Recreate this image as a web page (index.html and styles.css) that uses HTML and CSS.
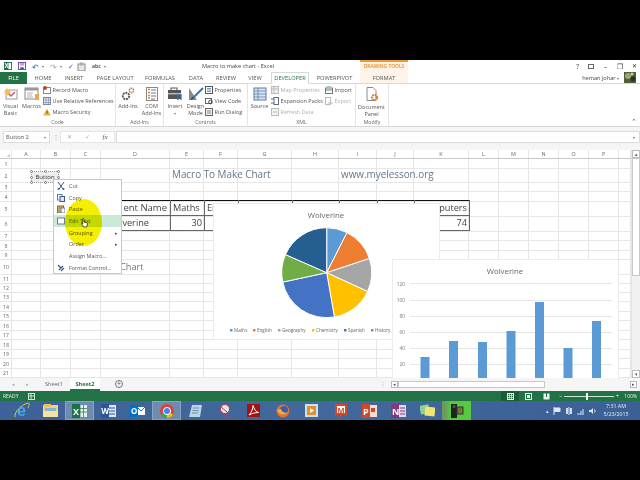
FILE: index.html
```html
<!DOCTYPE html>
<html lang="en">
<head>
<meta charset="utf-8">
<title>Macro to make chart - Excel</title>
<link rel="stylesheet" href="styles.css">
</head>
<body>
<div class="screen">
  <header class="titlebar">
    <div class="qat">
      <svg width="8" height="8" viewBox="0 0 9 9"><rect width="9" height="9" fill="#1e7145"/><rect x="5" y="1" width="3" height="7" fill="#fff"/><text x="0.5" y="7" class="svgb" fill="#fff" font-size="7">X</text></svg>
      <svg class="q-save" width="8" height="8" viewBox="0 0 9 9"><rect x=".5" y=".5" width="8" height="8" fill="none" stroke="#6a3d9a"/><rect x="2" y="1" width="5" height="3" fill="#b9a2d6"/><rect x="2.500" y="6" width="4" height="2.500" fill="#6a3d9a"/></svg>
      <span class="qu">↶</span><span class="qa">▾</span>
      <span class="qr">↷</span><span class="qa">▾</span>
      <span class="qs">✓</span>
      <svg width="9" height="9" viewBox="0 0 9 9"><rect x="1" y="2" width="7" height="7" fill="#e8e8e8" stroke="#8a8a8a"/><rect x="3" y="0.5" width="3" height="3" fill="#aaa"/></svg>
      <span class="qabc">abc</span><span class="qa">▾</span>
    </div>
    <div class="doctitle">Macro to make chart - Excel</div>
    <div class="drawtools">DRAWING TOOLS</div>
    <div class="winbtns"><span>?</span><span class="winbox"></span><span>–</span><span>❐</span><span class="winx">✕</span></div>
  </header>

  <nav class="tabs">
    <span class="tab file">FILE</span>
    <span class="tab t-home">HOME</span>
    <span class="tab t-ins">INSERT</span>
    <span class="tab t-page">PAGE LAYOUT</span>
    <span class="tab t-form">FORMULAS</span>
    <span class="tab t-data">DATA</span>
    <span class="tab t-rev">REVIEW</span>
    <span class="tab t-view">VIEW</span>
    <span class="tab dev">DEVELOPER</span>
    <span class="tab t-pp">POWERPIVOT</span>
    <span class="tab format">FORMAT</span>
    <span class="user">heman johar <i class="qa">▾</i></span>
    <svg class="avatar" width="12" height="11" viewBox="0 0 12 11"><rect width="12" height="11" fill="#4f5f38"/><circle cx="4" cy="4" r="3" fill="#9aa878"/><circle cx="9" cy="7" r="2.500" fill="#2b3320"/><circle cx="8" cy="2" r="1.500" fill="#c8cfa8"/></svg>
  </nav>

  <section class="ribbon">
    <div class="group g-code">
      <div class="gbody">
        <div class="big b-vb">
          <svg width="16" height="14" viewBox="0 0 16 14"><rect x="3" y="3" width="11" height="9" fill="#fff" stroke="#9c9c9c"/><path d="M1 5 L4 1 L8 5 L5 9 Z" fill="#f3c15b"/><path d="M6 7 l2 2 l4 -4" fill="none" stroke="#d04a7b" stroke-width="1.400"/></svg>
          <span>Visual<br>Basic</span>
        </div>
        <div class="big b-mac">
          <svg width="16" height="14" viewBox="0 0 16 14"><rect x="1" y="1" width="13" height="11" fill="#fff" stroke="#8a8a8a"/><rect x="1" y="1" width="13" height="2.500" fill="#9a9a9a"/><path d="M3 6h6M3 8h5M3 10h6" stroke="#b5b5b5"/><path d="M11 7h4v6h-4z" fill="#f0a94a"/></svg>
          <span>Macros</span>
        </div>
        <div class="smalls s-code">
          <div class="small"><svg width="8" height="8" viewBox="0 0 8 8"><rect x=".5" y="1.500" width="7" height="6" fill="#fff" stroke="#888"/><circle cx="2" cy="2" r="2" fill="#c8402f"/></svg>Record Macro</div>
          <div class="small"><svg width="8" height="8" viewBox="0 0 8 8"><rect x=".5" y=".5" width="7" height="7" fill="#dfe6f2" stroke="#7a8aa5"/><path d="M0 3h8M0 5.500h8M3 0v8M5.500 0v8" stroke="#7a8aa5" stroke-width=".6"/></svg>Use Relative References</div>
          <div class="small"><svg width="8" height="8" viewBox="0 0 8 8"><path d="M4 .5 L7.800 7.500 H.2 Z" fill="#e8b23c"/><rect x="3.600" y="3" width=".9" height="2.400" fill="#5a4210"/></svg>Macro Security</div>
        </div>
      </div>
      <div class="glabel">Code</div>
    </div>

    <div class="group g-add">
      <div class="gbody">
        <div class="big b-add">
          <svg width="16" height="14" viewBox="0 0 16 14"><circle cx="6" cy="9" r="3.200" fill="none" stroke="#5c5c5c" stroke-width="2" stroke-dasharray="2 .8"/><circle cx="11.500" cy="3.500" r="2.200" fill="none" stroke="#c9863a" stroke-width="1.600" stroke-dasharray="1.500 .6"/></svg>
          <span>Add-Ins</span>
        </div>
        <div class="big b-com">
          <svg width="16" height="14" viewBox="0 0 16 14"><rect x="2.500" y=".5" width="11" height="13" fill="#fff" stroke="#8a8a8a"/><path d="M7 3h5M7 6h5M7 9h5M7 12h4" stroke="#777"/><path d="M4 2.500h2M4 5.500h2M4 8.500h2M4 11h2" stroke="#d9842b" stroke-width="1.300"/></svg>
          <span>COM<br>Add-Ins</span>
        </div>
      </div>
      <div class="glabel">Add-Ins</div>
    </div>

    <div class="group g-ctl">
      <div class="gbody">
        <div class="big b-ins">
          <svg width="16" height="14" viewBox="0 0 16 14"><rect x="1" y="3" width="13" height="9" fill="#555"/><rect x="4" y="1" width="6" height="2.500" fill="none" stroke="#555"/><rect x="1" y="6" width="13" height="1.400" fill="#bbb"/><path d="M11 7v6M14 7v6" stroke="#2e75b6" stroke-width="1.300"/></svg>
          <span>Insert<br><i class="qa">▾</i></span>
        </div>
        <div class="big b-des">
          <svg width="16" height="14" viewBox="0 0 16 14"><path d="M1 13 V1 L9 13 Z" fill="#8a8a8a"/><path d="M4 12 L15 1" stroke="#2e75b6" stroke-width="2"/><path d="M3 13 L5 10" stroke="#333"/></svg>
          <span>Design<br>Mode</span>
        </div>
        <div class="smalls s-ctl">
          <div class="small"><svg width="8" height="8" viewBox="0 0 8 8"><rect x=".5" y=".5" width="7" height="7" fill="#fff" stroke="#555"/><path d="M2 2.500h4M2 4h4M2 5.500h4" stroke="#2e75b6" stroke-width=".7"/></svg>Properties</div>
          <div class="small"><svg width="8" height="8" viewBox="0 0 8 8"><rect x=".5" y="1.500" width="6" height="5" fill="#fff" stroke="#666"/><circle cx="5.500" cy="5" r="1.800" fill="none" stroke="#444"/></svg>View Code</div>
          <div class="small"><svg width="8" height="8" viewBox="0 0 8 8"><rect x=".5" y=".5" width="7" height="7" fill="#eee" stroke="#666"/><rect x="2" y="2" width="4" height="4" fill="#bbb"/></svg>Run Dialog</div>
        </div>
      </div>
      <div class="glabel">Controls</div>
    </div>

    <div class="group g-xml">
      <div class="gbody">
        <div class="big b-src">
          <svg width="16" height="14" viewBox="0 0 16 14"><rect x="2" y="1" width="12" height="12" fill="#dbe6f3" stroke="#5b7fa8"/><path d="M2 4h12M2 7h12M2 10h12M6 1v12" stroke="#5b7fa8" stroke-width=".8"/></svg>
          <span>Source</span>
        </div>
        <div class="smalls s-xml1">
          <div class="small off"><svg width="8" height="8" viewBox="0 0 8 8"><rect x=".5" y=".5" width="7" height="7" fill="#eee" stroke="#bbb"/><path d="M0 3h8M3 0v8" stroke="#bbb"/></svg>Map Properties</div>
          <div class="small"><svg width="8" height="8" viewBox="0 0 8 8"><rect x="3" y=".5" width="4.500" height="7" fill="#fff" stroke="#667"/><path d="M0 2h3M0 6h3" stroke="#2e75b6" stroke-width="1.200"/></svg>Expansion Packs</div>
          <div class="small off"><svg width="8" height="8" viewBox="0 0 8 8"><rect x=".5" y=".5" width="7" height="7" fill="#f2f2f2" stroke="#bbb"/><path d="M2 4h4" stroke="#bbb"/></svg>Refresh Data</div>
        </div>
        <div class="smalls s-xml2">
          <div class="small"><svg width="8" height="8" viewBox="0 0 8 8"><rect x=".5" y="2" width="7" height="5.500" fill="#fff" stroke="#777"/><path d="M2 0h4M1 4h6" stroke="#4c8a5a"/></svg>Import</div>
          <div class="small off"><svg width="8" height="8" viewBox="0 0 8 8"><rect x=".5" y=".5" width="5" height="7" fill="#fff" stroke="#bbb"/><path d="M3 6h5" stroke="#bbb"/></svg>Export</div>
        </div>
      </div>
      <div class="glabel">XML</div>
    </div>

    <div class="group g-mod">
      <div class="gbody">
        <div class="big b-doc">
          <svg width="16" height="15" viewBox="0 0 16 15"><path d="M3 .5h6l3 3v10H3z" fill="#fff" stroke="#8a8a8a"/><circle cx="10.500" cy="10.500" r="2.600" fill="none" stroke="#e07b24" stroke-width="2" stroke-dasharray="1.700 .7"/></svg>
          <span>Document<br>Panel</span>
        </div>
      </div>
      <div class="glabel">Modify</div>
    </div>
    <span class="collapse">⌃</span>
  </section>

  <section class="fbar">
    <div class="namebox"><span>Button 2</span><i class="qa">▾</i></div>
    <span class="fdots">⋮</span>
    <div class="fbtns"><span>✕</span><span>✓</span><span class="fx">fx</span></div>
    <div class="finput"><i class="qa">▾</i></div>
  </section>

  <section class="sheet">
    <div class="grid">
      <div class="cols">
        <div class="col corner"></div>
        <div class="col">A</div><div class="col">B</div><div class="col">C</div><div class="col">D</div>
        <div class="col">E</div><div class="col">F</div><div class="col">G</div><div class="col">H</div>
        <div class="col">I</div><div class="col">J</div><div class="col">K</div><div class="col">L</div>
        <div class="col">M</div><div class="col">N</div><div class="col">O</div><div class="col">P</div>
        <div class="col"></div>
      </div>
      <div class="rows">
        <div class="row"><span>1</span></div><div class="row"><span>2</span></div><div class="row"><span>3</span></div>
        <div class="row"><span>4</span></div><div class="row"><span>5</span></div><div class="row"><span>6</span></div>
        <div class="row"><span>7</span></div><div class="row"><span>8</span></div><div class="row"><span>9</span></div>
        <div class="row"><span>10</span></div><div class="row"><span>11</span></div><div class="row"><span>12</span></div>
        <div class="row"><span>13</span></div><div class="row"><span>14</span></div><div class="row"><span>15</span></div>
        <div class="row"><span>16</span></div><div class="row"><span>17</span></div><div class="row"><span>18</span></div>
        <div class="row"><span>19</span></div><div class="row"><span>20</span></div><div class="row"><span>21</span></div>
      </div>

      <div class="bigtext t-title">Macro To Make Chart</div>
      <div class="bigtext t-url">www.myelesson.org</div>
      <div class="bigtext t-chart">Chart</div>

      <table class="data">
        <colgroup><col class="w69"><col class="w34"><col class="w34"><col class="w54"><col class="w47"><col class="w38"><col class="w37"><col class="w55"></colgroup>
        <tr><th class="right name">ent Name</th><th>Maths</th><th>English</th><th></th><th></th><th></th><th></th><th class="right">puters</th></tr>
        <tr><td class="right name2">verine</td><td class="right">30</td><td></td><td></td><td></td><td></td><td></td><td class="right">74</td></tr>
      </table>

      <div class="chart pie">
        <svg width="225" height="135" viewBox="214 204 225 135">
          <text x="326" y="218" class="ctitle" text-anchor="middle">Wolverine</text>
          <g transform="translate(326.700 272.700)" stroke="#fff" stroke-width="1">
            <path d="M0 0V-45A45 45 0 0 1 20.300 -40.100Z" fill="#5b9bd5"/>
            <path d="M0 0L20.300 -40.100A45 45 0 0 1 42.700 -14.200Z" fill="#ed7d31"/>
            <path d="M0 0L42.700 -14.200A45 45 0 0 1 40.900 18.800Z" fill="#a5a5a5"/>
            <path d="M0 0L40.900 18.800A45 45 0 0 1 7.700 44.300Z" fill="#ffc000"/>
            <path d="M0 0L7.700 44.300A45 45 0 0 1 -44 9.400Z" fill="#4472c4"/>
            <path d="M0 0L-44 9.400A45 45 0 0 1 -41.200 -18.100Z" fill="#70ad47"/>
            <path d="M0 0L-41.200 -18.100A45 45 0 0 1 0 -45Z" fill="#255e91"/>
          </g>
          <g class="legend">
            <rect x="230" y="329" width="2.500" height="2.500" fill="#5b9bd5"/><text x="234" y="332">Maths</text>
            <rect x="253" y="329" width="2.500" height="2.500" fill="#ed7d31"/><text x="257" y="332">English</text>
            <rect x="278" y="329" width="2.500" height="2.500" fill="#a5a5a5"/><text x="282" y="332">Geography</text>
            <rect x="312" y="329" width="2.500" height="2.500" fill="#ffc000"/><text x="316" y="332">Chemistry</text>
            <rect x="344" y="329" width="2.500" height="2.500" fill="#4472c4"/><text x="348" y="332">Spanish</text>
            <rect x="371" y="329" width="2.500" height="2.500" fill="#70ad47"/><text x="375" y="332">History</text>
          </g>
        </svg>
      </div>

      <div class="chart bars">
        <svg width="225" height="125" viewBox="393 260 225 125">
          <text x="505" y="274" class="ctitle" text-anchor="middle">Wolverine</text>
          <g stroke="#e6e6e6" stroke-width="1">
            <path d="M410 283.500H612M410 300.500H612M410 316.500H612M410 332.500H612M410 348.500H612M410 364.500H612"/>
          </g>
          <g class="axis" text-anchor="end">
            <text x="405" y="285.500">120</text><text x="405" y="302">100</text><text x="405" y="318">80</text>
            <text x="405" y="334">60</text><text x="405" y="350">40</text><text x="405" y="366">20</text>
          </g>
          <g fill="#5b9bd5">
            <rect x="420.500" y="357" width="9" height="28"/>
            <rect x="449" y="341" width="9" height="44"/>
            <rect x="478" y="342" width="9" height="43"/>
            <rect x="506.500" y="331" width="9" height="54"/>
            <rect x="535" y="302" width="9" height="83"/>
            <rect x="563.500" y="348" width="9" height="37"/>
            <rect x="592" y="321" width="9" height="64"/>
          </g>
        </svg>
      </div>

      <div class="shape">
        <span>Button</span>
        <i class="h h1"></i><i class="h h2"></i><i class="h h3"></i><i class="h h4"></i><i class="h h5"></i><i class="h h6"></i><i class="h h7"></i><i class="h h8"></i>
      </div>

      <div class="menu">
        <div class="mi"><svg width="8" height="8" viewBox="0 0 8 8"><path d="M1 0 L6 7M7 0 L2 7" stroke="#3a5a8c"/><circle cx="1.500" cy="7" r="1" fill="#3a5a8c"/><circle cx="6.500" cy="7" r="1" fill="#3a5a8c"/></svg><span>Cut</span></div>
        <div class="mi"><svg width="8" height="8" viewBox="0 0 8 8"><rect x=".5" y=".5" width="4.500" height="5.500" fill="#fff" stroke="#6a7c98"/><rect x="3" y="2.500" width="4.500" height="5" fill="#dde5f0" stroke="#3a5a8c"/></svg><span>Copy</span></div>
        <div class="mi"><svg width="8" height="8" viewBox="0 0 8 8"><rect x=".5" y="1" width="6" height="7" fill="#c9a25a" stroke="#8a6d35"/><rect x="4" y="3" width="4" height="5" fill="#fff" stroke="#6a7c98"/></svg><span>Paste</span></div>
        <div class="mi active"><svg width="8" height="8" viewBox="0 0 8 8"><rect x=".5" y="1" width="7" height="6" fill="#fff" stroke="#6a7c98"/></svg><span>Edit Text</span></div>
        <div class="mi"><i class="mg"></i><span>Grouping</span><b>▸</b></div>
        <div class="mi"><i class="mg"></i><span>Order</span><b>▸</b></div>
        <div class="mi"><i class="mg"></i><span>Assign Macro...</span></div>
        <div class="mi"><svg width="8" height="8" viewBox="0 0 8 8"><path d="M1 1l3 3M4 7l3-3M2 6l4-4" stroke="#3a5a8c" stroke-width="1.200"/></svg><span>Format Control...</span></div>
      </div>

      <div class="spot"></div>
      <svg class="hand" width="7" height="10" viewBox="0 0 8 11"><path d="M2 .7 Q3 0 3.400 1 V4.400 L6.600 5.200 Q7.600 5.600 7.400 6.600 L6.600 10 H3 L.6 6.200 Q.6 5.200 1.800 5.800 L2 6.400 Z" fill="#fff" stroke="#111" stroke-width=".8"/></svg>
    </div>
    <div class="vscroll">
      <span class="varrow">▴</span>
      <div class="vthumb"></div>
      <div class="vgap"></div>
      <span class="varrow">▾</span>
    </div>
  </section>

  <section class="tabsrow">
    <span class="navarr">◂</span><span class="navarr">▸</span>
    <span class="sh">Sheet1</span>
    <span class="sh on">Sheet2</span>
    <span class="plus">+</span>
    <span class="hdots">⋮</span>
    <div class="hscroll"><span class="harrow">◂</span><div class="hthumb"></div><div class="hgap"></div><span class="harrow">▸</span></div>
  </section>

  <footer class="status">
    <span class="ready">READY</span>
    <svg class="macroic" width="7" height="7" viewBox="0 0 7 7"><rect x=".5" y=".5" width="6" height="6" fill="none" stroke="#cfe3d6"/><path d="M0 3h7M3 0v7" stroke="#cfe3d6"/></svg>
    <div class="views">
      <span class="view on"><svg width="7" height="7" viewBox="0 0 7 7"><rect x=".5" y=".5" width="6" height="6" fill="none" stroke="#e8f2ec"/><path d="M0 2.500h7M0 4.500h7M2.500 0v7M4.500 0v7" stroke="#e8f2ec" stroke-width=".7"/></svg></span>
      <span class="view"><svg width="7" height="7" viewBox="0 0 7 7"><rect x=".5" y=".5" width="6" height="6" fill="none" stroke="#e8f2ec"/><rect x="2" y="2" width="3" height="3" fill="#e8f2ec"/></svg></span>
      <span class="view"><svg width="7" height="7" viewBox="0 0 7 7"><rect x=".5" y=".5" width="6" height="6" fill="#e8f2ec"/><path d="M3.500 0v4" stroke="#217346"/></svg></span>
    </div>
    <div class="zoom"><span>–</span><div class="slider"><i></i></div><span>+</span></div>
    <span class="pct">100%</span>
  </footer>

  <footer class="taskbar">
    <div class="task"><svg width="18" height="19" viewBox="0 0 18 19"><path d="M2 16 C1 11 8 4 15 2 C17 2 16 5 15 7" fill="none" stroke="#f2c230" stroke-width="1"/><text x="4" y="15" class="ietxt">e</text></svg></div>
    <div class="task"><svg width="15" height="13" viewBox="0 0 15 13"><rect x="0" y="1" width="15" height="12" fill="#f0d27a"/><rect x="1" y="0" width="7" height="3" fill="#e8c35a"/><rect x="2" y="4" width="11" height="3" fill="#7fb5d8"/><rect x="0" y="7" width="15" height="6" fill="#f7e3a0"/></svg></div>
    <div class="task lit"><svg width="15" height="14" viewBox="0 0 15 14"><rect x="5" y="1" width="10" height="12" fill="#e4efe8"/><path d="M8 1v12M11.500 1v12M5 4.500h10M5 8h10" stroke="#1e7145" stroke-width=".7"/><rect y="0" width="8" height="14" fill="#1e7145"/><text x="1" y="10.500" class="svgb" fill="#fff" font-size="9">X</text></svg></div>
    <div class="task"><svg width="15" height="14" viewBox="0 0 15 14"><rect x="5" y="1" width="10" height="12" fill="#dfe8f5"/><path d="M8 4h6M8 7h6M8 10h6" stroke="#2b579a"/><rect y="0" width="8" height="14" fill="#2b579a"/><text x="0.3" y="10" class="svgb" fill="#fff" font-size="8">W</text></svg></div>
    <div class="task"><svg width="15" height="14" viewBox="0 0 15 14"><rect x="7" y="3" width="8" height="8" fill="#fff"/><path d="M7 3l4 4 4-4" fill="none" stroke="#0072c6"/><rect y="1" width="8" height="12" fill="#0072c6"/><text x="1" y="10" class="svgb" fill="#fff" font-size="8">O</text></svg></div>
    <div class="task lit"><svg width="14" height="14" viewBox="0 0 14 14"><circle cx="7" cy="7" r="7" fill="#db4437"/><path d="M7 7 L13 10.500 A7 7 0 0 1 1 10.500 Z" fill="#3aa757"/><path d="M7 7 L7 14 A7 7 0 0 0 13 10.500 Z" fill="#fbbc05"/><circle cx="7" cy="7" r="3.600" fill="#4285f4" stroke="#fff"/></svg></div>
    <div class="task"><svg width="14" height="14" viewBox="0 0 14 14"><path d="M3 1h10l-2 12H0z" fill="#b8d4e8"/><path d="M4 4h6M3.500 6.500h6M3 9h6" stroke="#6f93b3"/></svg></div>
    <div class="task"><svg width="14" height="14" viewBox="0 0 14 14"><circle cx="7" cy="5" r="4.500" fill="#e9e4ea" stroke="#c43a4e"/><path d="M3 3l6 5M5 10l7 3" stroke="#c43a4e"/></svg></div>
    <div class="task"><svg width="13" height="13" viewBox="0 0 13 13"><rect width="13" height="13" fill="#a11414"/><path d="M2 11 C5 8 6 4 6 1.500 C7 5 9 8 11.500 8.500 C8 8.500 5 9.500 2 11 Z" fill="none" stroke="#fff"/></svg></div>
    <div class="task"><svg width="14" height="14" viewBox="0 0 14 14"><circle cx="7" cy="7" r="6.500" fill="#e8722a"/><circle cx="8" cy="6" r="4" fill="#3c5fa8"/><path d="M1 6 C3 11 9 12 12 8 C10 9.500 6 9 5 5 Z" fill="#f4b13c"/></svg></div>
    <div class="task"><svg width="13" height="13" viewBox="0 0 13 13"><rect width="13" height="13" fill="#cfe1ef"/><rect x="2" y="2" width="9" height="9" fill="#e98c2a"/><path d="M5 4l4 2.500-4 2.500z" fill="#fff"/></svg></div>
    <div class="task"><svg width="12" height="14" viewBox="0 0 12 14"><rect width="12" height="11" fill="#d24726"/><path d="M4 11h4l-2 3z" fill="#d24726"/><rect x="2" y="2" width="8" height="7" fill="#fff"/><text x="2.400" y="8.500" class="svgb" fill="#d24726" font-size="7.500">M</text></svg></div>
    <div class="task"><svg width="15" height="14" viewBox="0 0 15 14"><rect x="5" y="1" width="10" height="12" fill="#f6dcd2"/><rect x="9" y="4" width="4" height="4" fill="#d24726"/><rect y="0" width="8" height="14" fill="#d24726"/><text x="1" y="10.500" class="svgb" fill="#fff" font-size="9">P</text></svg></div>
    <div class="task"><svg width="15" height="14" viewBox="0 0 15 14"><rect x="5" y="1" width="10" height="12" fill="#e6d8ec"/><path d="M9 4h5M9 7h5M9 10h5" stroke="#80397b"/><rect y="0" width="8" height="14" fill="#80397b"/><text x="1" y="10.500" class="svgb" fill="#fff" font-size="9">N</text></svg></div>
    <div class="task"><svg width="15" height="13" viewBox="0 0 15 13"><rect x="0" y="1" width="9" height="9" fill="#8fd18e" transform="rotate(-10 4 5)"/><rect x="5" y="3" width="10" height="9" fill="#f4e36c" transform="rotate(6 10 7)"/></svg></div>
    <div class="task app"><svg width="14" height="15" viewBox="0 0 14 15"><rect x="1" y="1" width="6" height="14" fill="#222"/><circle cx="4" cy="3.500" r="1.600" fill="#555"/><rect x="7" y="4" width="6" height="7" fill="#6f7a3d" stroke="#333"/></svg></div>
    <div class="tray">
      <span class="tr">▴</span>
      <svg width="8" height="8" viewBox="0 0 8 8"><path d="M1 0v8M1 1h6v3.500H1" fill="#dde7f3" stroke="#dde7f3"/></svg>
      <svg width="8" height="8" viewBox="0 0 8 8"><rect x="1" y="1" width="6" height="6" fill="#cfdcec"/><rect x="3" y="0" width="2" height="8" fill="#8fa7c6"/></svg>
      <svg width="8" height="8" viewBox="0 0 8 8"><path d="M0 7h1M2 6v2M4 4v4M6 2v6" stroke="#c8d6e8" stroke-width="1.200"/></svg>
      <svg width="8" height="8" viewBox="0 0 8 8"><path d="M0 3h2l2-2v6L2 5H0z" fill="#dde7f3"/><path d="M5.500 2.500q1.500 1.500 0 3" fill="none" stroke="#dde7f3"/></svg>
      <div class="clock">7:31 AM<br>5/23/2015</div>
    </div>
  </footer>
</div>
</body>
</html>
```

FILE: styles.css
```css
* { box-sizing: border-box; }
html, body { margin: 0; height: 100%; background: #000; overflow: hidden; }
i { font-style: normal; }
body { font-family: "Open Sans", "Liberation Sans", sans-serif; font-size: 5.500px; color: #555; }
.screen { margin-top: 60px; width: 640px; height: 360px; background: #fff; display: flex; flex-direction: column; filter: blur(.35px); }
.svgb { font-family: "Open Sans", sans-serif; font-weight: 700; }
.ietxt { font-family: "Liberation Sans", sans-serif; font-size: 16px; font-weight: 700; fill: #4aa8e8; }
.qa { font-size: 4px; color: #777; }

/* title bar */
.titlebar { height: 12px; display: flex; align-items: center; position: relative; flex: none; }
.qat { display: flex; align-items: center; gap: 3px; padding-left: 4px; width: 120px; }
.q-save { margin-left: 3px; }
.qu { color: #2a6fb5; font-size: 8px; margin-left: 3px; }
.qr { color: #aaa; font-size: 8px; margin-left: 3px; }
.qs { color: #2a6fb5; font-size: 7px; margin-left: 3px; }
.qabc { font-size: 5px; font-weight: 700; color: #555; margin-left: 3px; }
.doctitle { margin-left: 82px; width: 68px; text-align: center; white-space: nowrap; font-size: 5.600px; color: #444; }
.drawtools { margin-left: 90px; width: 48px; height: 12px; background: #fdf3e8; border-top: 2px solid #ed9a2b; color: #e88a1e; font-size: 4.900px; font-weight: 600; text-align: center; line-height: 9px; white-space: nowrap; }
.winbtns { margin-left: auto; width: 64px; padding-right: 3px; display: flex; justify-content: space-between; align-items: center; font-size: 7px; color: #444; }
.winbox { width: 6px; height: 5px; border: 1px solid #666; }
.winx { font-size: 6px; color: #333; }

/* tabs */
.tabs { height: 12px; flex: none; display: flex; align-items: stretch; border-bottom: 1px solid #d8d8d8; font-size: 5.700px; white-space: nowrap; }
.tab { display: flex; align-items: center; justify-content: center; color: #555; }
.file { width: 27px; background: #217346; color: #fff; margin-bottom: -1px; }
.t-home { width: 32px; }
.t-ins { width: 30px; }
.t-page { width: 52px; }
.t-form { width: 38px; }
.t-data { width: 34px; }
.t-rev { width: 26px; }
.t-view { width: 32px; }
.dev { width: 38px; color: #217346; border: 1px solid #d8d8d8; border-bottom: 1px solid #fff; margin-bottom: -1px; }
.t-pp { width: 51px; }
.format { width: 48px; background: #fdf3e8; }
.user { margin-left: auto; align-self: center; font-size: 5.600px; color: #444; }
.avatar { margin: 0 4px 0 5px; align-self: center; }

/* ribbon */
.ribbon { height: 43px; flex: none; display: flex; border-bottom: 1px solid #d8d8d8; position: relative; }
.group { display: flex; flex-direction: column; border-right: 1px solid #e4e4e4; }
.gbody { flex: 1; display: flex; min-height: 0; }
.glabel { height: 8px; line-height: 8px; text-align: center; font-size: 5.200px; color: #666; }
.g-code { width: 116px; }
.g-add { width: 48px; }
.g-ctl { width: 84px; }
.g-xml { width: 108px; }
.g-mod { width: 33px; }
.big { display: flex; flex-direction: column; align-items: center; padding-top: 3px; text-align: center; line-height: 7.700px; gap: 1.500px; white-space: nowrap; }
.big svg { flex: none; }
.b-vb { width: 21px; }
.b-mac { width: 21px; }
.b-add { width: 24px; }
.b-com { width: 23px; }
.b-ins { width: 22px; }
.b-des { width: 19px; }
.b-src { width: 23px; }
.b-doc { width: 31px; }
.smalls { display: flex; flex-direction: column; }
.small { height: 11px; display: flex; align-items: center; gap: 1.500px; white-space: nowrap; }
.small svg { flex: none; }
.off { color: #b0b0b0; }
.s-code { margin-left: 1px; }
.s-xml1 { width: 53px; }
.s-xml2 { margin-left: 1px; }
.collapse { position: absolute; right: 3px; bottom: 0; font-size: 7px; color: #666; }

/* formula bar */
.fbar { height: 23px; flex: none; background: #f5f5f5; display: flex; align-items: center; padding: 0 0 3px 3px; }
.namebox { width: 47px; height: 12px; background: #fff; border: 1px solid #dcdcdc; display: flex; align-items: center; justify-content: space-between; padding: 0 3px 0 2px; font-size: 5.700px; color: #555; }
.fdots { width: 8px; margin-left: 2px; text-align: center; color: #aaa; }
.fbtns { width: 55px; height: 12px; display: flex; align-items: center; justify-content: space-around; background: #fff; border: 1px solid #e4e4e4; color: #aaa; font-size: 6px; }
.fx { color: #555; font-style: italic; font-family: "Liberation Serif", serif; font-size: 7px; }
.finput { flex: 1; height: 12px; margin-left: 1px; background: #fff; border: 1px solid #dcdcdc; display: flex; align-items: center; justify-content: flex-end; padding-right: 4px; }

/* sheet */
.sheet { flex: 1; min-height: 0; display: flex; }
.grid { flex: 1; position: relative; overflow: hidden; }
.cols { position: absolute; inset: 0; display: grid; grid-template-columns: 12px 29px 30px 30px 69px 34px 34px 54px 47px 38px 37px 55px 30px 30px 30px 30px 30px 12px; }
.col { border-right: 1px solid #e6e6e6; text-align: center; font-size: 5.400px; line-height: 8px; color: #666; }
.corner { background: linear-gradient(135deg, transparent 70%, #d0d0d0 70%) no-repeat 3px 1px / 7px 6px; }
.rows { position: absolute; inset: 8px 0 0 0; border-top: 1px solid #c8c8c8; display: grid; grid-template-rows: 10px 14px 9px 10px 15px 15px 9px 10px 9px 15px 9px 9px 9px 10px 9px 10px 9px 10px 9px 10px 9px; }
.row { border-bottom: 1px solid #e6e6e6; display: flex; align-items: center; }
.row span { width: 12px; text-align: center; font-size: 5.200px; color: #666; }

.bigtext { position: absolute; white-space: nowrap; color: #62778a; font-family: "Open Sans", sans-serif; font-size: 9.900px; line-height: 14px; }
.t-title { left: 172px; top: 17px; }
.t-url { left: 341px; top: 17px; }
.t-chart { left: 120px; top: 110px; font-size: 9.200px; }

.data { position: absolute; left: 101px; top: 50px; border-collapse: collapse; table-layout: fixed; width: 368px; border: 1px solid #222; font-family: "Open Sans", sans-serif; font-size: 9.200px; color: #444; }
.data th, .data td { font-weight: 400; height: 15px; padding: 0 2px; border: 1px solid #666; overflow: hidden; white-space: nowrap; text-align: left; line-height: 14px; }
.data th { border-top: 1px solid #111; }
.data .right { text-align: right; }
.data .name { font-size: 9.500px; padding-right: 3px; }
.data .name2 { padding-right: 21px; }
.w69 { width: 69px; } .w34 { width: 34px; } .w54 { width: 54px; } .w47 { width: 47px; } .w38 { width: 38px; } .w37 { width: 37px; } .w55 { width: 55px; }

.chart { position: absolute; background: #fff; box-shadow: 0 0 0 1px #ececec; }
.chart svg { display: block; }
.pie { left: 214px; top: 54px; width: 225px; height: 135px; }
.bars { left: 393px; top: 110px; width: 225px; height: 125px; }
.ctitle { font-family: "Open Sans", sans-serif; font-size: 7.800px; fill: #666; }
.legend { font-family: "Open Sans", sans-serif; font-size: 4.600px; fill: #666; }
.axis { font-family: "Open Sans", sans-serif; font-size: 4.800px; fill: #777; }

.shape { position: absolute; left: 31px; top: 21px; width: 28px; height: 12px; background: #eee; border: 1px dotted #999; text-align: center; font-size: 6px; line-height: 10px; color: #333; }
.h { position: absolute; width: 3px; height: 3px; border-radius: 50%; background: #fff; border: .5px solid #777; }
.h1 { left: -2px; top: -2px; } .h2 { left: 12px; top: -2px; } .h3 { right: -2px; top: -2px; }
.h4 { left: -2px; top: 4px; } .h5 { right: -2px; top: 4px; }
.h6 { left: -2px; bottom: -2px; } .h7 { left: 12px; bottom: -2px; } .h8 { right: -2px; bottom: -2px; }

.menu { position: absolute; left: 53px; top: 29px; width: 69px; height: 95px; background: #fff; border: 1px solid #c8c8c8; }
.mi { height: 11.700px; display: flex; align-items: center; position: relative; padding-left: 3px; gap: 4px; font-size: 5.400px; color: #555; }
.mi svg, .mg { flex: none; width: 8px; height: 8px; }
.mi b { position: absolute; right: 3px; font-size: 5px; font-weight: 400; }
.active { background: #cce8d6; }

.spot { position: absolute; left: 65px; top: 49px; width: 37px; height: 47px; border-radius: 50%; background: #f4ee00; mix-blend-mode: multiply; }
.hand { position: absolute; left: 81px; top: 68px; }

.vscroll { width: 9px; flex: none; display: flex; flex-direction: column; border-left: 1px solid #e4e4e4; background: #f1f1f1; }
.varrow { height: 8px; background: #fff; border: 1px solid #bbb; font-size: 5px; line-height: 6px; text-align: center; color: #555; flex: none; }
.vthumb { height: 118px; background: #fff; border: 1px solid #c8c8c8; flex: none; }
.vgap { flex: 1; }

/* sheet tabs */
.tabsrow { height: 13px; flex: none; background: #f5f5f5; display: flex; align-items: stretch; font-size: 5.600px; }
.navarr { width: 14px; text-align: center; color: #aaa; line-height: 13px; font-size: 5px; }
.navarr:first-child { margin-left: 6px; }
.sh { width: 32px; text-align: center; line-height: 12px; color: #666; }
.sh:nth-of-type(3) { margin-left: 4px; }
.on.sh { width: 30px; background: #fff; color: #217346; font-weight: 700; border-bottom: 2px solid #217346; }
.plus { width: 8px; height: 8px; border: 1px solid #777; border-radius: 50%; margin: 2px 0 0 15px; text-align: center; line-height: 5px; font-size: 7px; }
.hdots { margin-left: 257px; color: #bbb; line-height: 13px; }
.hscroll { width: 246px; margin-left: 5px; height: 7px; margin-top: 3px; display: flex; }
.harrow { width: 7px; background: #fff; border: 1px solid #bbb; font-size: 5px; line-height: 5px; text-align: center; color: #555; flex: none; }
.hthumb { width: 147px; background: #fff; border: 1px solid #c8c8c8; flex: none; }
.hgap { flex: 1; }

/* status bar */
.status { height: 10px; flex: none; background: #217346; color: #e4f0e9; display: flex; align-items: center; font-size: 5px; }
.ready { margin-left: 3px; }
.macroic { margin-left: 10px; }
.views { margin-left: auto; display: flex; }
.view { width: 18px; height: 10px; display: flex; align-items: center; justify-content: center; }
.view.on { background: #1a5c38; }
.zoom { display: flex; align-items: center; gap: 2px; margin-left: 4px; width: 60px; justify-content: space-between; font-size: 6px; }
.slider { flex: 1; height: 1px; background: #cfe3d6; position: relative; }
.slider i { position: absolute; left: 22px; top: -3px; width: 2px; height: 7px; background: #fff; }
.pct { margin: 0 3px 0 5px; }

/* taskbar */
.taskbar { height: 19px; flex: none; background: linear-gradient(90deg, #3c6297, #42689c 50%, #3a6095); display: flex; padding-left: 7px; align-items: stretch; }
.task { width: 29px; flex: none; display: flex; align-items: center; justify-content: center; }
.lit { background: #6f8bb0; box-shadow: inset 0 0 0 1px #8aa2c2; }
.app { background: linear-gradient(90deg, #6d9a5c 10%, #58c840 30%); }
.tray { margin-left: auto; display: flex; align-items: center; gap: 4px; padding-right: 9px; color: #e6edf6; }
.tr { font-size: 5px; }
.clock { width: 30px; text-align: center; font-size: 5.300px; line-height: 7.500px; white-space: nowrap; }
```
